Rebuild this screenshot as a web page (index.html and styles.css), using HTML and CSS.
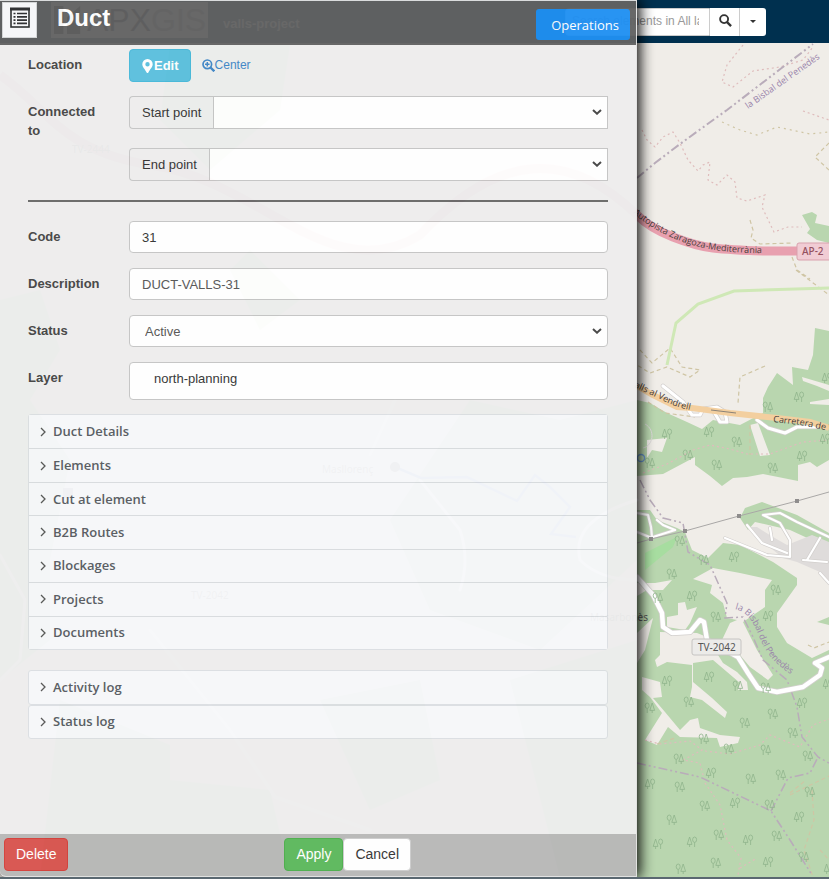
FILE: index.html
```html
<!DOCTYPE html>
<html lang="en">
<head>
<meta charset="utf-8">
<title>Duct 31</title>
<link rel="stylesheet" href="styles.css">
</head>
<body>
<div class="app">
  <svg class="map" viewBox="0 0 829 877" preserveAspectRatio="xMinYMin slice" role="img" aria-label="Map">
    <defs>
      <g id="tree" fill="none" stroke="#8fb48b" stroke-width="0.8">
        <ellipse cx="2.2" cy="2.7" rx="2" ry="2.7"/><path d="M2.2 5.4V10M7.2 0L4.8 7.4H9.6ZM7.2 7.4V10"/>
      </g>
      <g id="tree2" fill="none" stroke="#8fb48b" stroke-width="0.8">
        <ellipse cx="7.6" cy="2.7" rx="2" ry="2.7"/><path d="M7.6 5.4V10M2.6 0L0.2 7.4H5ZM2.6 7.4V10"/>
      </g>
      <path id="p-bisbal" d="M748 109L829 52"/>
      <path id="p-ap" d="M633 213Q650 228 673 238T722 251T790 253"/>
      <path id="p-valls" d="M634 387L660 399Q675 408 700 412"/>
      <path id="p-carr" d="M773 422L800 425L840 433"/>
      <path id="p-bisbal2" d="M735 609C752 613 756 630 762 643S778 668 804 682"/>
    </defs>
    <rect width="829" height="877" fill="#f0ede8"/>
    <g fill="#b9d6af">
      <path d="M0 300L40 290L60 350L30 400L70 460L50 560L50 640L0 680ZM170 45H290L280 110L210 170L160 120ZM470 400L560 420L637 400V560L540 650L430 610L390 520ZM230 270L250 250L300 300L260 330ZM60 700L170 745L170 780L270 790L290 877H40ZM320 700L420 680L440 780L370 810ZM510 680L637 640V877H560Z"/>
      <path d="M802 215L812 212L817 215L815 223L829 226V243L817 240L807 233L810 229Z"/>
      <path d="M637 400L650 403L667 413L687 422L702 429L713 420L740 425L763 413L763 398L768 387L777 373L793 385L792 367L808 370L813 355L815 328L829 331V460L817 467L810 462L798 465L798 481L763 474L747 477L733 478L722 486L710 476L695 465V457L663 474L637 476Z"/>
      <path d="M740 518L745 508L762 502L797 515L829 533V548L790 530L755 522L748 530ZM747 510L760 505L765 503Z"/>
      <path d="M637 510L650 510L657 520L677 528L685 532L692 550L708 558L723 543L740 545L773 562L797 578L797 585L777 613L777 627L787 643L812 658L829 650V877H637Z"/>
      <path d="M817 622L829 617V625Z"/>
    </g>
    <path d="M645 553L677 537L673 547L645 570Z" fill="#a7dda0"/>
    <g fill="#f0ede8">
      <path d="M750 425L758 423L770 455L760 456ZM802 377L829 385V391L817 386L803 381ZM810 402L829 399V405L810 404ZM647 440L667 438L662 452L652 450L647 458Z"/>
      <path d="M693 579L713 568L740 573L772 580L765 590L765 607L743 622L757 650L773 675L768 680L750 667L740 655L722 640L730 623L737 620L727 618L723 603L710 593L712 585Z"/>
      <path d="M667 617L678 615L678 603L685 602L687 610L697 607L690 623L685 630L667 627Z"/>
      <path d="M660 632L697 633L707 637L723 663L737 672L747 682L748 690L738 690L740 683L713 660L693 663L693 682L712 698L727 712L725 718L702 700L690 697L692 687V665L667 662L657 667L655 660L660 655Z"/>
      <path d="M637 583H655L672 580L663 590L647 590L637 596ZM637 633L653 618L645 650L637 663Z"/>
      <path d="M642 677L660 682L662 697L653 698L665 712L680 730L690 720L698 718L700 728L720 735L740 737L738 743L720 747L717 738L680 737L668 727L657 745L645 740L662 713L650 697L642 690Z"/>
    </g>
    <path d="M747 527H757L773 537L787 545L812 535L829 542V585L820 572L797 562L783 558L767 545Z" fill="#dfdcdb"/>
    <g fill="none" stroke="#dcd9d9" stroke-width="1"><path d="M645 424C656 430 653 446 643 448"/></g>
    <g fill="none" stroke="#dfbcbc" stroke-width="1.2" stroke-dasharray="2 3">
      <path d="M642 130L647 140L655 147L663 137L673 132L680 143L688 160L698 171L703 165L710 162L708 180L717 185L727 175L735 182L737 198L747 201L765 195L762 207L774 232L788 227L802 227"/>
      <path d="M743 45L727 65L722 82L733 87L753 71L780 67L803 60L813 47"/>
      <path d="M803 111L829 120M643 473L667 464L693 450L710 445L730 449L747 454L770 454L803 442L829 440"/>
      <path d="M645 740L660 744L690 741L702 750L683 760L700 763L705 783L720 805L727 840L741 858L738 875M705 751L730 754L760 745L770 735L800 747L813 725L829 719M740 868L757 858"/>
    </g>
    <g fill="none" stroke="#cfc5a4" stroke-width="1.2" stroke-dasharray="4 3">
      <path stroke-dasharray="2 4" d="M722 122L740 130L757 135L777 127L810 134L829 132"/>
      <path d="M829 143L815 157L829 170M750 220L753 230L751 238L760 244L793 243M792 257L797 270L810 279M796 270L829 295"/>
      <path d="M640 350L652 363L670 348L682 367L700 370L690 377L667 367L650 373L637 365M765 366L740 377L738 403M648 402L665 413L695 417M750 425V455"/>
      <path d="M657 744L675 738M790 793L806 780M790 795L829 776M812 790L814 820L804 850L813 877M820 850L829 860M808 645L814 648L829 642"/>
    </g>
    <path d="M667 365L676 323L698 304L734 291L829 288" fill="none" stroke="#cfe8b6" stroke-width="3"/>
    <g fill="none" stroke="#b9acba" stroke-width="2" stroke-dasharray="9 3 2 3 2 3">
      <path d="M637 178L655 163L680 144L727 110L813 44"/>
      <path stroke-width="1.5" d="M640 480L650 500L663 518L683 523L688 552L710 565L727 603L725 618L743 617L753 637L763 660L787 680L797 707L802 737L818 757L829 763"/>
      <path stroke-width="1.6" d="M637 763L700 777L771 811L790 840L812 875M771 811L788 778L810 773L818 757"/>
    </g>
    <path d="M0 75C50 110 60 150 150 165C260 180 330 290 420 235C500 150 570 150 637 215" fill="none" stroke="#e59aab" stroke-width="9"/>
    <path d="M637 215Q650 228 673 237T713 248T763 251H800" fill="none" stroke="#e8a0af" stroke-width="9"/>
    <g fill="none" stroke="#ffffff" stroke-linecap="round" stroke-linejoin="round">
      <g stroke="#d2cfcd" stroke-width="4.5">
        <path d="M663 386L683 402L692 415L700 415L703 409L717 407L725 412L727 422L720 422L714 412M757 420L768 428L785 433L797 427L817 427"/>
        <path stroke-width="6" d="M637 577L653 595L662 613L663 627L672 633L690 632L700 620L704 622L707 640L738 657L748 673L758 688L777 692L803 687L820 675L822 668L815 663L829 657"/>
        <path stroke-width="3.5" d="M725 538L767 555L790 557L790 540L780 523L763 515L780 513L797 522L829 537M747 525L762 543L787 553M770 528L772 540M803 560L827 562M820 538L807 560M820 573L829 583M637 513L648 515L651 527L652 538M657 520L663 525L675 530L653 537M637 532L652 538"/>
      </g>
      <path stroke-width="3.2" d="M663 386L683 402L692 415L700 415L703 409L717 407L725 412L727 422L720 422L714 412M757 420L768 428L785 433L797 427L817 427"/>
      <path stroke-width="4.5" d="M637 577L653 595L662 613L663 627L672 633L690 632L700 620L704 622L707 640L738 657L748 673L758 688L777 692L803 687L820 675L822 668L815 663L829 657"/>
      <path stroke-width="2.2" d="M725 538L767 555L790 557L790 540L780 523L763 515L780 513L797 522L829 537M747 525L762 543L787 553M770 528L772 540M803 560L827 562M820 538L807 560M820 573L829 583M637 513L648 515L651 527L652 538M657 520L663 525L675 530L653 537M637 532L652 538"/>
      <path stroke-width="3" d="M0 555L25 600L20 660L0 680M150 630L230 730L275 797L370 830M420 480L460 530Q470 560 460 590M370 455L395 400M637 500Q570 520 580 560Q600 580 637 580"/>
    </g>
    <path d="M637 386L653 395L677 407L692 408L730 413L777 418L810 422L829 428" fill="none" stroke="#f3cf9f" stroke-width="6"/>
    <path d="M711 410L736 413" stroke="#8b8378" stroke-width="1"/>
    <path d="M637 543L651 539L685 531L739 516L797 501L829 492" fill="none" stroke="#a9a7a6" stroke-width="1"/>
    <path d="M649 537h4v4h-4zM683 529h4v4h-4zM737 514h4v4h-4zM795 499h4v4h-4z" fill="#8f8d8d"/>
    <circle cx="641" cy="458" r="3.6" fill="none" stroke="#6c9bd2" stroke-width="1.5"/>
    <g>
      <use href="#tree2" x="662" y="429"/><use href="#tree2" x="704" y="427"/><use href="#tree" x="732" y="437"/><use href="#tree" x="683" y="450"/><use href="#tree" x="712" y="460"/><use href="#tree" x="768" y="463"/><use href="#tree2" x="797" y="451"/><use href="#tree2" x="794" y="392"/><use href="#tree" x="763" y="402"/><use href="#tree2" x="822" y="373"/><use href="#tree" x="645" y="458"/><use href="#tree2" x="820" y="434"/>
      <use href="#tree" x="675" y="536"/><use href="#tree2" x="729" y="552"/><use href="#tree" x="699" y="555"/><use href="#tree" x="667" y="569"/><use href="#tree" x="771" y="585"/><use href="#tree2" x="687" y="591"/><use href="#tree" x="711" y="612"/><use href="#tree2" x="763" y="611"/><use href="#tree" x="653" y="593"/>
      <use href="#tree2" x="662" y="676"/><use href="#tree2" x="704" y="672"/><use href="#tree" x="733" y="681"/><use href="#tree" x="761" y="683"/><use href="#tree" x="684" y="697"/><use href="#tree2" x="797" y="698"/><use href="#tree" x="768" y="709"/><use href="#tree" x="740" y="718"/><use href="#tree" x="645" y="703"/><use href="#tree" x="788" y="728"/><use href="#tree2" x="823" y="679"/>
      <use href="#tree" x="699" y="734"/><use href="#tree" x="724" y="744"/><use href="#tree" x="761" y="745"/><use href="#tree" x="674" y="754"/><use href="#tree" x="803" y="751"/><use href="#tree2" x="706" y="768"/><use href="#tree" x="746" y="774"/><use href="#tree" x="776" y="770"/><use href="#tree2" x="645" y="779"/><use href="#tree" x="675" y="782"/><use href="#tree" x="805" y="787"/><use href="#tree2" x="730" y="798"/><use href="#tree" x="700" y="801"/><use href="#tree" x="765" y="800"/><use href="#tree2" x="794" y="812"/><use href="#tree" x="667" y="815"/><use href="#tree" x="714" y="830"/><use href="#tree2" x="653" y="839"/><use href="#tree2" x="687" y="837"/><use href="#tree2" x="743" y="835"/><use href="#tree" x="772" y="831"/><use href="#tree2" x="763" y="857"/><use href="#tree" x="711" y="858"/><use href="#tree" x="676" y="864"/><use href="#tree" x="799" y="852"/><use href="#tree2" x="824" y="864"/>
    </g>
    <path d="M395 467L421 478L467 477L517 501L535 475L550 487L570 507L551 534L576 537" fill="none" stroke="#5b7fe0" stroke-width="2.5"/>
    <circle cx="395" cy="467" r="5" fill="#4a4a4a"/><rect x="63" y="488" width="10" height="10" fill="#555577"/>
    <g class="map-text">
      <text class="purple"><textPath href="#p-bisbal">la Bisbal del Penedès</textPath></text>
      <text class="purple"><textPath href="#p-bisbal2">la Bisbal del Penedès</textPath></text>
      <text class="road"><textPath href="#p-ap">Autopista Zaragoza-Mediterrània</textPath></text>
      <text class="road"><textPath href="#p-valls">alls al Vendrell</textPath></text>
      <text class="road"><textPath href="#p-carr">Carretera de Valls</textPath></text>
      <text x="648" y="621" text-anchor="end" class="town">Masarbonès</text>
      <text x="322" y="473" class="town">Masllorenç</text>
      <text x="72" y="153" class="town">TV-2444</text><text x="191" y="599" class="town">TV-2042</text>
      <rect x="797" y="243" width="34" height="17" rx="2" fill="#f1ccd4" stroke="#d9a1ad"/>
      <text x="802" y="255" class="ap">AP-2</text>
      <rect x="692" y="639" width="49" height="16" rx="2" fill="#ecebe9" stroke="#c6c4c2"/>
      <text x="698" y="651" class="tv">TV-2042</text>
    </g>
  </svg>

  <header class="topbar">
    <div class="brand"><svg viewBox="0 0 30 30" class="brand-mark" aria-hidden="true"><path d="M0 0H10V30H0ZM14 12L28 0V30H14Z"/></svg><span><b>APX</b>GIS</span></div>
    <span class="project">valls-project</span>
    <form class="search">
      <input type="text" aria-label="Search elements" placeholder="Search elements in All layers">
      <button type="button" aria-label="Search"><svg viewBox="0 0 14 14" width="13" height="13"><circle cx="5.5" cy="5.5" r="4.3" fill="none" stroke="#333" stroke-width="2"/><path d="M8.7 8.7L13 13" stroke="#333" stroke-width="2.5"/></svg></button>
      <button type="button" class="caret" aria-label="Search options"><svg viewBox="0 0 6 3" width="6" height="3"><path d="M0 0H6L3 3Z" fill="#333"/></svg></button>
    </form>
  </header>

  <section class="panel">
    <header class="panel-head">
      <button class="list-button" type="button" aria-label="Form list"><svg viewBox="0 0 20 21" width="20" height="22"><rect x="1" y="1.5" width="18" height="18" fill="#fff" stroke="#333" stroke-width="1.6"/><path d="M0 0H20V3H0Z" fill="#333"/><path d="M3.5 6h2M3.5 9.3h2M3.5 12.6h2M3.5 15.9h2M7 6h10M7 9.3h10M7 12.6h10M7 15.9h10" stroke="#333" stroke-width="1.7"/></svg></button>
      <h1>Duct</h1>
      <button class="operations" type="button">Operations</button>
    </header>

    <main class="panel-body">
      <div class="row location">
        <span class="label">Location</span>
        <div class="actions">
          <button class="btn info" type="button"><svg viewBox="0 0 11 14" width="11" height="14"><path fill="#fff" fill-rule="evenodd" d="M5.5 0A5.2 5.2 0 0 0 0.3 5.2C0.3 8 3 10 4.6 13.4Q5.5 14.5 6.4 13.4C8 10 10.7 8 10.7 5.2A5.2 5.2 0 0 0 5.5 0ZM5.5 3A2.2 2.2 0 1 1 5.5 7.4A2.2 2.2 0 0 1 5.5 3Z"/></svg>Edit</button>
          <a class="center" href="#center"><svg viewBox="0 0 13 13" width="13" height="13"><g fill="none" stroke="#3f86c8"><circle cx="5.3" cy="5.3" r="4.3" stroke-width="1.7"/><path d="M8.5 8.5L12.3 12.3" stroke-width="2.4"/><path d="M3 5.3H7.6M5.3 3V7.6" stroke-width="1.5"/></g></svg>Center</a>
        </div>
      </div>
      <div class="row connected">
        <span class="label">Connected to</span>
        <div class="points">
          <div class="group"><label for="start">Start point</label><div class="pick"><select id="start"><option></option></select><svg class="chev" viewBox="0 0 10 6" width="10" height="6"><path d="M1 1L5 4.7L9 1"/></svg></div></div>
          <div class="group"><label for="end">End point</label><div class="pick"><select id="end"><option></option></select><svg class="chev" viewBox="0 0 10 6" width="10" height="6"><path d="M1 1L5 4.7L9 1"/></svg></div></div>
        </div>
      </div>
      <hr>
      <div class="row"><label class="label" for="code">Code</label><input class="field code" id="code" type="text" value="31"></div>
      <div class="row"><label class="label" for="desc">Description</label><input class="field" id="desc" type="text" value="DUCT-VALLS-31"></div>
      <div class="row"><label class="label" for="status">Status</label><div class="pick"><select class="field" id="status"><option>Active</option></select><svg class="chev" viewBox="0 0 10 6" width="10" height="6"><path d="M1 1L5 4.7L9 1"/></svg></div></div>
      <div class="row"><label class="label" for="layer">Layer</label><input class="field layer" id="layer" type="text" value="north-planning"></div>

      <div class="accordion">
        <button type="button"><svg class="arrow" viewBox="0 0 6 10"><path d="M1 1L5 5L1 9"/></svg>Duct Details</button>
        <button type="button"><svg class="arrow" viewBox="0 0 6 10"><path d="M1 1L5 5L1 9"/></svg>Elements</button>
        <button type="button"><svg class="arrow" viewBox="0 0 6 10"><path d="M1 1L5 5L1 9"/></svg>Cut at element</button>
        <button type="button"><svg class="arrow" viewBox="0 0 6 10"><path d="M1 1L5 5L1 9"/></svg>B2B Routes</button>
        <button type="button"><svg class="arrow" viewBox="0 0 6 10"><path d="M1 1L5 5L1 9"/></svg>Blockages</button>
        <button type="button"><svg class="arrow" viewBox="0 0 6 10"><path d="M1 1L5 5L1 9"/></svg>Projects</button>
        <button type="button"><svg class="arrow" viewBox="0 0 6 10"><path d="M1 1L5 5L1 9"/></svg>Documents</button>
      </div>
      <div class="logs">
        <button type="button"><svg class="arrow" viewBox="0 0 6 10"><path d="M1 1L5 5L1 9"/></svg>Activity log</button>
        <button type="button"><svg class="arrow" viewBox="0 0 6 10"><path d="M1 1L5 5L1 9"/></svg>Status log</button>
      </div>
    </main>

    <footer class="panel-foot">
      <button class="btn danger" type="button">Delete</button>
      <div class="confirm"><button class="btn success" type="button">Apply</button><button class="btn plain" type="button">Cancel</button></div>
    </footer>
  </section>
</div>
</body>
</html>
```

FILE: styles.css
```css
* { box-sizing: border-box; }
body {
  margin: 0;
  background: #fff;
  color: #333;
  font: 13px/19px "Liberation Sans", Arial, sans-serif;
}
button, input, select { font: inherit; color: inherit; margin: 0; }

.app {
  position: relative;
  display: flex;
  flex-direction: column;
  height: calc(100vh - 10px);
  min-height: 820px;
  overflow: hidden;
  border-bottom: 2px solid #5a6871;
}
.map { position: absolute; inset: 0; width: 100%; height: 100%; }
.map-text { font-family: "Noto Sans", sans-serif; font-size: 10px; }
.purple { fill: #9a84ab; font-family: "Open Sans", sans-serif; font-size: 9px; }
.road { fill: #4a3f3c; font-family: "Open Sans", sans-serif; font-size: 9px; }
.town { fill: #555; }
.ap { fill: #95515f; font-weight: 500; }
.tv { fill: #555; }

.topbar {
  position: relative;
  display: flex;
  align-items: center;
  height: 43px;
  padding: 0 63px 0 51px;
  background: #00304f;
}
.brand {
  display: flex;
  align-items: center;
  gap: 4px;
  width: 157px;
  height: 36px;
  margin-top: -3px;
  padding: 0 2px;
  background: #fff;
  color: #99a;
  font-size: 32px;
}
.brand b { color: #112; font-weight: 400; }
.brand-mark { flex: none; width: 30px; height: 28px; }
.project { margin-left: 15px; padding-top: 4px; color: #fff; font-weight: 700; }
.search { display: flex; margin-left: auto; height: 28px; }
.search input { width: 145px; padding: 0 10px 0 6px; border: 1px solid #ccc; border-radius: 4px 0 0 4px; background: #fff; font-size: 12px; }
.search input::placeholder { color: #999; }
.search button { display: flex; align-items: center; justify-content: center; width: 30px; padding: 0 0 2px 2px; border: 0; border-right: 1px solid #ccc; background: #fff; }
.search .caret { width: 26px; padding: 0 1px 0 0; border-right: 0; border-radius: 0 3px 3px 0; }

.panel {
  position: absolute;
  inset: 0 192px 0 0;
  display: flex;
  flex-direction: column;
  border: 1px solid #e3e3e3;
  border-left: 0;
  border-radius: 0 0 0 6px;
  background: #eee;
  box-shadow: 2px 0 14px 1px #000;
  opacity: 0.96;
  overflow: hidden;
}
.panel-head {
  display: flex;
  align-items: flex-start;
  height: 44px;
  padding: 1px 6px 0 2px;
  background: #626262;
}
.list-button { width: 35px; height: 36px; padding: 0; border: 1px solid #ddd; background: #fff; }
.list-button svg { display: block; margin: 3px auto 8px; }
h1 { margin: 1px 0 0 20px; color: #fff; font-size: 24px; line-height: 29px; }
.operations {
  height: 31px;
  margin: 7px 0 0 auto;
  padding: 1px 11px 0 15px;
  border: 0;
  border-radius: 3px;
  background: #2090f2;
  color: #fff;
  font-family: "Open Sans", sans-serif;
}

.panel-body { flex: 1; padding: 4px 28px 0; }
.row { display: grid; grid-template-columns: 101px minmax(0, 1fr); align-items: start; margin-bottom: 15px; }
.location { margin-bottom: 14px; }
.label { padding: 6px 20px 0 0; font-weight: 700; color: #444; }
.actions { display: flex; align-items: center; gap: 11px; }
.btn { height: 33px; padding: 0 11px; border: 1px solid; border-radius: 4px; font-size: 14px; }
.info { display: flex; align-items: center; gap: 1px; padding: 0 11px 0 12px; background: #5bc0de; border-color: #46b8da; color: #fff; font-size: 13px; font-weight: 700; }
.center { display: flex; align-items: center; color: #3f86c8; font-size: 12px; text-decoration: none; }
.points { display: grid; gap: 19px; }
.group { display: flex; height: 33px; }
.group label { flex: none; padding: 6px 12px; border: 1px solid #c5c5c5; border-right: 0; border-radius: 4px 0 0 4px; background: #eee; }
.pick { position: relative; flex: 1; }
.pick select { display: block; width: 100%; height: 33px; padding: 0 15px; border: 1px solid #c5c5c5; background: #fff; appearance: none; }
.pick .field { height: 32px; }
.chev { position: absolute; right: 6px; top: 13px; pointer-events: none; }
.chev path { fill: none; stroke: #444; stroke-width: 2; }
hr { height: 2px; margin: 19px 0; border: 0; background: #696969; }
.connected { margin-bottom: 0; }
.row .field { width: 100%; height: 32px; border: 1px solid #c5c5c5; border-radius: 4px; background: #fff; color: #555; }
input.field { padding: 0 12px; }
.row .code { color: #333; }
.row .layer { height: 38px; padding: 0 24px 5px; color: #333; }

.accordion, .logs { display: grid; grid-auto-rows: 1fr; }
.accordion { min-height: 236px; margin-bottom: 20px; border: 1px solid #dcdfe3; border-radius: 3px; }
.row + .accordion { margin-top: -1px; }
.accordion button, .logs button {
  display: flex;
  align-items: center;
  gap: 7px;
  padding: 0 11px;
  border: 0;
  background: #f7f8fa;
  color: #555a60;
  font-family: "Open Sans", sans-serif;
  font-weight: 600;
  text-align: left;
}
.accordion button + button { border-top: 1px solid #d9dcdf; }
.logs { min-height: 69px; }
.logs button { border: 1px solid #dcdfe3; border-radius: 3px; }
.arrow { flex: none; width: 6px; height: 10px; }
.arrow path { fill: none; stroke: #555; stroke-width: 1.3; }

.panel-foot { display: flex; justify-content: space-between; height: 42px; padding: 4px 225px 4px 4px; background: #b8b8b8; }
.danger { background: #d9534f; border-color: #d43f3a; color: #fff; }
.confirm { display: flex; }
.success { background: #5cb85c; border-color: #4cae4c; color: #fff; }
.plain { background: #fff; border-color: #ccc; }
```
